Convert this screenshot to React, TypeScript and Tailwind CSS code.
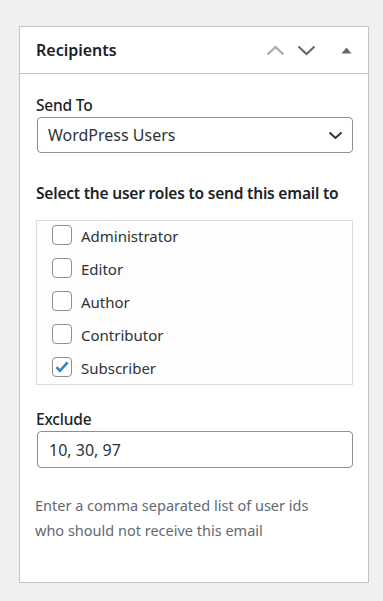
import { useState } from 'react';

// Recipients metabox (WordPress admin style)

const ROLES = ['Administrator', 'Editor', 'Author', 'Contributor', 'Subscriber'];

function Chevron({ dir, className }: { dir: 'up' | 'down'; className?: string }) {
  return (
    <svg className={className} width="19" height="11" viewBox="0 0 19 11" fill="none">
      <path
        d={dir === 'up' ? 'M1.5 9.5L9.5 2l8 7.5' : 'M1.5 1.5L9.5 9l8-7.5'}
        stroke="currentColor"
        strokeWidth="2.2"
      />
    </svg>
  );
}

function Checkbox({ checked, onChange }: { checked: boolean; onChange: () => void }) {
  return (
    <button
      type="button"
      onClick={onChange}
      className="flex h-[20px] w-[20px] shrink-0 items-center justify-center rounded-[4px] border border-[#8c8f94] bg-white"
    >
      {checked && (
        <svg width="16" height="16" viewBox="0 0 16 16">
          <path d="M2.5 8.2l3.4 3.6L13.6 3.4" fill="none" stroke="#3582c4" strokeWidth="2.6" />
        </svg>
      )}
    </button>
  );
}

export default function App() {
  const [roles, setRoles] = useState<Record<string, boolean>>({ Subscriber: true });
  const [exclude, setExclude] = useState('10, 30, 97');

  return (
    <div className="min-h-[601px] w-[383px] bg-[#f0f0f1] px-[19px] pt-[26px] font-['Noto_Sans',sans-serif] text-[#1d2327]">
      <div className="w-[350px] border border-[#c3c4c7] bg-white">
        {/* Header */}
        <div className="flex h-[47px] items-center border-b border-[#c3c4c7] pl-[16px] pr-[16px]">
          <h2 className="flex-1 text-[16px] font-semibold">Recipients</h2>
          <Chevron dir="up" className="text-[#a7aaad]" />
          <Chevron dir="down" className="ml-[12px] text-[#646970]" />
          <svg className="ml-[25px]" width="11" height="7" viewBox="0 0 11 7">
            <path d="M0.5 6.5L5.5 0.5l5 6z" fill="#646970" />
          </svg>
        </div>

        {/* Body */}
        <div className="px-[16px] pb-[39px] pt-[20px]">
          <div className="text-[15.5px] font-medium leading-[23px] tracking-[-0.2px]">Send To</div>
          <div className="ml-[1px] flex h-[36px] w-[316px] items-center justify-between rounded-[4px] border border-[#8c8f94] pl-[10px] pr-[9px] text-[16px] text-[#2c3338]">
            <span>WordPress Users</span>
            <svg width="15" height="9" viewBox="0 0 15 9" fill="none">
              <path d="M1.5 1.5l6 5.5 6-5.5" stroke="#2c3338" strokeWidth="2" />
            </svg>
          </div>

          <div className="mt-[28px] whitespace-nowrap text-[15.5px] font-semibold leading-[24px] tracking-[-0.2px]">
            Select the user roles to send this email to
          </div>

          <div className="mt-[15px] h-[165px] w-[317px] overflow-hidden border border-[#dcdcde] bg-[#fdfdfd]">
            {ROLES.map((r) => (
              <label key={r} className="flex h-[33px] items-start gap-[9px] pl-[15px] pt-[4px]">
                <Checkbox
                  checked={!!roles[r]}
                  onChange={() => setRoles((s) => ({ ...s, [r]: !s[r] }))}
                />
                <span className="pt-[1px] text-[15px] leading-[20px] text-[#2c3338]">{r}</span>
              </label>
            ))}
          </div>

          <div className="mt-[22px] text-[15.5px] font-medium leading-[24px] tracking-[-0.2px]">Exclude</div>
          <input
            value={exclude}
            onChange={(e) => setExclude(e.target.value)}
            className="ml-[1px] block h-[37px] w-[316px] rounded-[4px] border border-[#8c8f94] px-[11px] text-[16px] text-[#2c3338] outline-none"
          />

          <p className="-ml-[1px] mt-[25px] w-[300px] text-[14.5px] leading-[25px] text-[#646970]">
            Enter a comma separated list of user ids who should not receive this email
          </p>
        </div>
      </div>
    </div>
  );
}
